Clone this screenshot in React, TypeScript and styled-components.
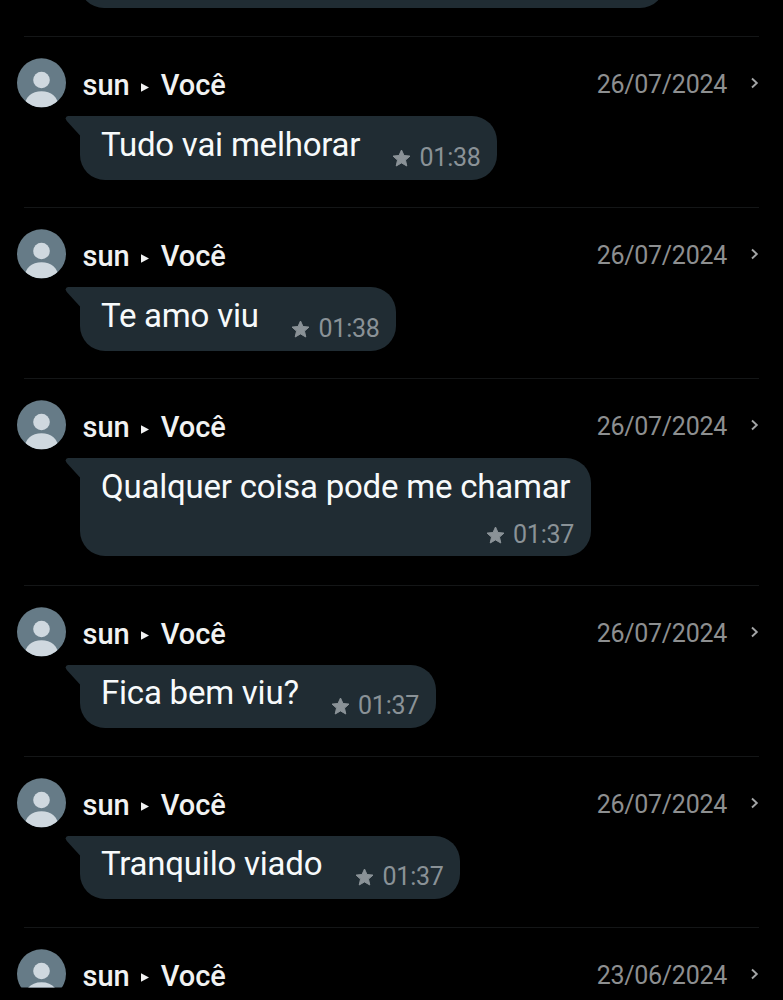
import React from "react";
import styled, { createGlobalStyle } from "styled-components";

const GlobalStyle = createGlobalStyle`
  * { box-sizing: border-box; }
  html, body { margin: 0; background: #000; }
  body { font-family: Roboto, sans-serif; overflow: hidden; }
`;

const Screen = styled.main`
  height: 1000px;
  overflow: hidden;
  background: #000;
`;

const PreviousBubble = styled.div`
  width: 586px;
  height: 8px;
  margin: 0 0 28px 79px;
  overflow: hidden;
  display: flex;
  align-items: flex-end;

  &::after {
    content: "";
    flex: 0 0 100%;
    height: 64px;
    border-radius: 25px;
    background: #202c33;
  }
`;

const Row = styled.article<{ $tall?: boolean; $last?: boolean }>`
  height: ${(p) => (p.$last ? 73 : p.$tall ? 206.5 : 171)}px;
  display: flex;
  flex-direction: column;
`;

const Divider = styled.div`
  height: 1px;
  flex: none;
  margin: 0 24px;
  background: #141617;
`;

const Header = styled.header`
  display: flex;
  align-items: center;
  height: 49px;
  flex: none;
  margin: 21px 22px 0 17px;
`;

const Avatar = styled.svg<{ $cut?: boolean }>`
  width: 49px;
  height: 49px;
  flex: none;
  overflow: visible;
  clip-path: ${(p) => (p.$cut ? "inset(0 0 10px 0)" : "none")};
`;

const Names = styled.div`
  display: flex;
  align-items: center;
  flex: 1;
  margin-left: 16.5px;
  padding-top: 5px;
  color: #f1f2f2;
  font-size: 29px;
  line-height: 34px;
  font-weight: 500;
`;

const Arrow = styled.svg`
  width: 8px;
  height: 9px;
  margin: 4px 12px 0 11px;
`;

const DateText = styled.time`
  color: #8d8f90;
  font-size: 25px;
  letter-spacing: -0.27px;
  line-height: 30px;
  padding-top: 5px;
`;

const Chevron = styled.svg`
  width: 12px;
  height: 14px;
  margin: 1px 0 0 22px;
`;

const Bubble = styled.div<{ $width: number; $tall?: boolean }>`
  position: relative;
  display: flex;
  justify-content: ${(p) => (p.$tall ? "flex-start" : "space-between")};
  flex-direction: ${(p) => (p.$tall ? "column" : "row")};
  flex: none;
  width: ${(p) => p.$width}px;
  height: ${(p) => (p.$tall ? 98 : 63.5)}px;
  margin: 9px 0 0 80px;
  padding: 8.5px 16.5px 0 21px;
  border-radius: 0 25px 25px 25px;
  background: #202c33;
`;

const Tail = styled.svg`
  position: absolute;
  left: -15px;
  top: 0;
  width: 16px;
  height: 20px;
`;

const Message = styled.span`
  color: #f7fafb;
  font-size: 33px;
  letter-spacing: -0.22px;
  line-height: 40px;
  white-space: nowrap;
`;

const Meta = styled.span<{ $tall?: boolean }>`
  display: flex;
  align-items: center;
  align-self: ${(p) => (p.$tall ? "flex-end" : "flex-start")};
  height: 30px;
  margin-top: ${(p) => (p.$tall ? 13 : 18)}px;
  gap: 8.5px;
  color: #8a9297;
  font-size: 25px;
  letter-spacing: -0.27px;
  line-height: 30px;
`;

const Star = styled.svg`
  width: 19px;
  height: 18px;
`;

interface Starred {
  date: string;
  text?: string;
  time?: string;
  width?: number;
  tall?: boolean;
}

const messages: Starred[] = [
  { date: "26/07/2024", text: "Tudo vai melhorar", time: "01:38", width: 417 },
  { date: "26/07/2024", text: "Te amo viu", time: "01:38", width: 316 },
  { date: "26/07/2024", text: "Qualquer coisa pode me chamar", time: "01:37", width: 510.5, tall: true },
  { date: "26/07/2024", text: "Fica bem viu?", time: "01:37", width: 355.5 },
  { date: "26/07/2024", text: "Tranquilo viado", time: "01:37", width: 380 },
  { date: "23/06/2024" },
];

function StarredMessage({ date, text, time, width = 0, tall }: Starred) {
  return (
    <Row $tall={tall} $last={!text}>
      <Divider />
      <Header>
        <Avatar viewBox="0 0 49 49" $cut={!text}>
          <defs>
            <clipPath id="avatar-clip">
              <circle cx="24.5" cy="24.8" r="24.5" />
            </clipPath>
          </defs>
          <g clipPath="url(#avatar-clip)">
            <rect width="49" height="50" fill="#667b87" />
            <circle cx="24.5" cy="22" r="8.3" fill="#cfd8df" />
            <path d="M7 50C8 38.5 15 33.3 24.5 33.3S41 38.5 42 50Z" fill="#cfd8df" />
          </g>
        </Avatar>
        <Names>
          <span>sun</span>
          <Arrow viewBox="0 0 8 9">
            <path d="M0 .3 8 4.5 0 8.7Z" fill="#f1f2f2" />
          </Arrow>
          <span>Você</span>
        </Names>
        <DateText>{date}</DateText>
        <Chevron viewBox="0 0 12 14">
          <path d="M3 2.5 7.8 7 3 11.5" fill="none" stroke="#a3a5a6" strokeWidth="1.9" />
        </Chevron>
      </Header>
      {text && (
        <Bubble $width={width} $tall={tall}>
          <Tail viewBox="0 0 16 20">
            <path d="M16 0H3Q-.8 1 1.8 5L15 19.5H16Z" fill="#202c33" />
          </Tail>
          <Message>{text}</Message>
          <Meta $tall={tall}>
            <Star viewBox="0 0 19 18">
              <path
                d="M9.5 1 12 6.5 18 7.1 13.5 11.1 14.8 17 9.5 13.9 4.2 17 5.5 11.1 1 7.1 7 6.5Z"
                fill="#8a9297"
                stroke="#8a9297"
                strokeWidth="1"
                strokeLinejoin="round"
              />
            </Star>
            <span>{time}</span>
          </Meta>
        </Bubble>
      )}
    </Row>
  );
}

export default function App() {
  return (
    <>
      <GlobalStyle />
      <Screen>
        <PreviousBubble />
        {messages.map((message, i) => (
          <StarredMessage key={i} {...message} />
        ))}
      </Screen>
    </>
  );
}
